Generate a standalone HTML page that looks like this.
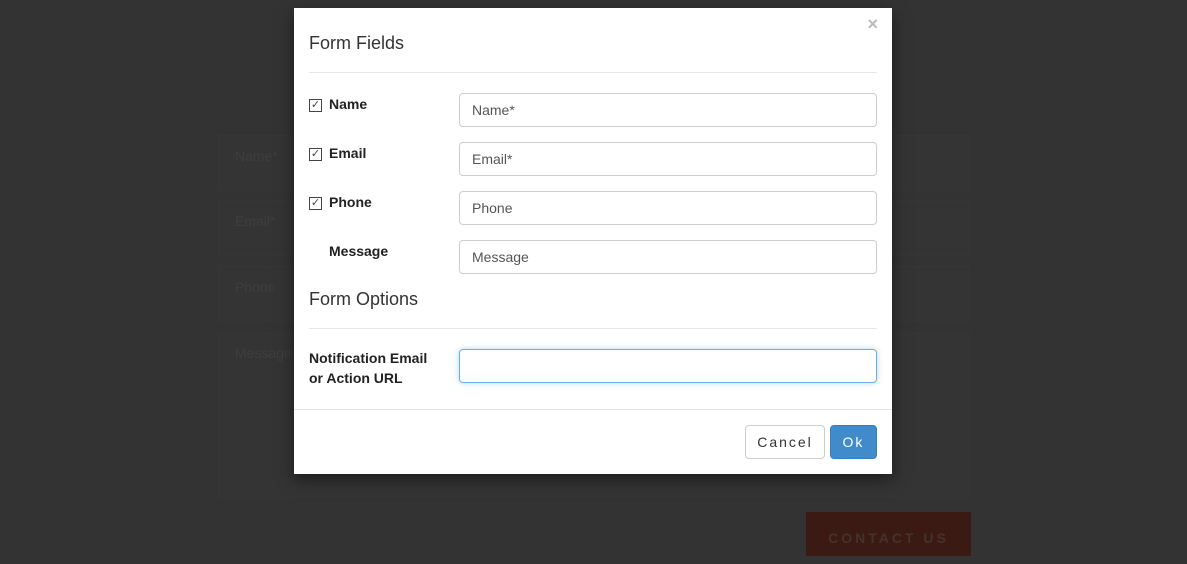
<!DOCTYPE html>
<html><head><style>
body{margin:0;width:1187px;height:556px;background:#333;font-family:"Liberation Sans",sans-serif;position:relative;overflow:hidden}
.bg{position:absolute;left:218px;width:752px;background:#343434;border:1px solid #363636;color:#3e3e3e;font-size:14px;box-sizing:border-box;padding:12px 16px}
.contact{position:absolute;left:806px;top:512px;width:165px;height:44px;background:#3a1a12;color:#45322d;font-weight:bold;letter-spacing:3px;font-size:14px;text-align:center;line-height:52px}
.modal{position:absolute;left:294px;top:8px;width:598px;height:466px;background:#fff;box-shadow:0 5px 15px rgba(0,0,0,.5)}
h4{position:absolute;left:15px;margin:0;font-weight:normal;font-size:18px;color:#333}
.hr{position:absolute;left:15px;right:15px;height:1px;background:#e8e8e8}
.lbl{position:absolute;left:35px;font-weight:bold;font-size:14px;color:#222}
.cb{position:absolute;left:15px;width:11px;height:11px;border:1px solid #444;font-size:11px;line-height:11px;text-align:center;color:#444}
.in{position:absolute;left:165px;width:418px;height:34px;border:1px solid #ccc;border-radius:4px;box-sizing:border-box;padding:0 12px;line-height:32px;font-size:14px;color:#555}
.x{position:absolute;right:14px;top:6px;color:#bbb;font-weight:bold;font-size:18px}
.btn{position:absolute;top:417px;height:34px;border-radius:4px;box-sizing:border-box;font-size:14px;letter-spacing:2px;text-align:center;line-height:32px}
</style></head><body>
<div class="bg" style="top:135px;height:56px">Name*</div>
<div class="bg" style="top:200px;height:56px">Email*</div>
<div class="bg" style="top:266px;height:56px">Phone</div>
<div class="bg" style="top:332px;height:166px">Message</div>
<div class="contact">CONTACT US</div>
<div class="modal">
<div class="x">×</div>
<h4 style="top:25px">Form Fields</h4>
<div class="hr" style="top:64px"></div>
<div class="cb" style="top:91px">✓</div><div class="lbl" style="top:88px">Name</div>
<div class="in" style="top:85px">Name*</div>
<div class="cb" style="top:140px">✓</div><div class="lbl" style="top:137px">Email</div>
<div class="in" style="top:134px">Email*</div>
<div class="cb" style="top:189px">✓</div><div class="lbl" style="top:186px">Phone</div>
<div class="in" style="top:183px">Phone</div>
<div class="lbl" style="top:235px">Message</div>
<div class="in" style="top:232px">Message</div>
<h4 style="top:281px">Form Options</h4>
<div class="hr" style="top:320px"></div>
<div class="lbl" style="top:340px;left:15px;line-height:20px">Notification Email<br>or Action URL</div>
<div class="in" style="top:341px;border-color:#66afe9;box-shadow:0 0 6px rgba(102,175,233,.5)"></div>
<div style="position:absolute;left:0;right:0;top:401px;height:1px;background:#e5e5e5"></div>
<div class="btn" style="left:451px;width:80px;border:1px solid #ccc;color:#333">Cancel</div>
<div class="btn" style="left:536px;width:47px;background:#428bca;border:1px solid #357ebd;color:#fff">Ok</div>
</div>
</body></html>
